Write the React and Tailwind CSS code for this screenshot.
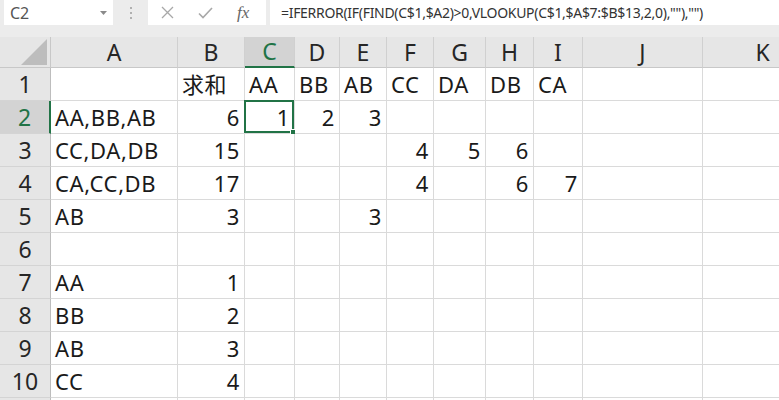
import React from "react";

const COLS = [
  { key: "A", w: "w-[127px]" },
  { key: "B", w: "w-[67px]" },
  { key: "C", w: "w-[50px]" },
  { key: "D", w: "w-[45px]" },
  { key: "E", w: "w-[47px]" },
  { key: "F", w: "w-[47px]" },
  { key: "G", w: "w-[52px]" },
  { key: "H", w: "w-[48px]" },
  { key: "I", w: "w-[49px]" },
  { key: "J", w: "w-[120px]" },
  { key: "K", w: "w-[120px]" },
];

// cell values, strings left, numbers right
const ROWS = [
  ["", "求和", "AA", "BB", "AB", "CC", "DA", "DB", "CA"],
  ["AA,BB,AB", 6, 1, 2, 3],
  ["CC,DA,DB", 15, "", "", "", 4, 5, 6],
  ["CA,CC,DB", 17, "", "", "", 4, "", 6, 7],
  ["AB", 3, "", "", 3],
  [],
  ["AA", 1],
  ["BB", 2],
  ["AB", 3],
  ["CC", 4],
];

const font = "font-['Noto_Sans','Noto_Sans_CJK_SC',sans-serif]";

function FormulaBar() {
  return (
    <div className="flex h-[37px] bg-[#ececec] items-start">
      <div className="ml-[4px] w-[109px] h-[25px] bg-white flex items-center justify-between pl-[6px] pr-[6px]">
        <span className={`${font} text-[16px] text-[#555]`}>C2</span>
        <svg width="7" height="4" viewBox="0 0 7 4"><path d="M0 0h7L3.5 4z" fill="#8a8a8a" /></svg>
      </div>
      <div className="w-[35px] h-[25px] flex flex-col items-center justify-center gap-[3px]">
        <div className="w-[2px] h-[2px] bg-[#b0b0b0]" />
        <div className="w-[2px] h-[2px] bg-[#b0b0b0]" />
        <div className="w-[2px] h-[2px] bg-[#b0b0b0]" />
      </div>
      <div className="w-[118px] h-[25px] bg-white flex items-center pl-[13px] gap-[24px]">
        <svg width="13" height="13" viewBox="0 0 13 13"><path d="M1 1l11 11M12 1L1 12" stroke="#a8a8a8" strokeWidth="1.3" /></svg>
        <svg width="15" height="12" viewBox="0 0 15 12"><path d="M1 6.5l4 4L14 1" stroke="#a8a8a8" strokeWidth="1.6" fill="none" /></svg>
        <span className="font-['Liberation_Serif',serif] italic text-[17px] text-[#666] leading-none">fx</span>
      </div>
      <div className="ml-[4px] flex-1 h-[25px] bg-white flex items-center pl-[11px] whitespace-nowrap overflow-hidden">
        <span className={`${font} text-[14px] text-[#333] tracking-[-0.3px]`}>
          =IFERROR(IF(FIND(C$1,$A2)&gt;0,VLOOKUP(C$1,$A$7:$B$13,2,0),""),"")
        </span>
      </div>
    </div>
  );
}

function HeaderRow() {
  return (
    <div className="flex h-[31px] bg-[#e6e6e6]">
      <div className="w-[51px] shrink-0 border-r border-b border-[#c8c8c8] flex items-center justify-end pr-[3px]">
        <svg width="26" height="26" viewBox="0 0 26 26"><path d="M26 0V26H0z" fill="#bdbdbd" /></svg>
      </div>
      {COLS.map((c) => {
        const sel = c.key === "C";
        return (
          <div
            key={c.key}
            className={`${c.w} shrink-0 border-r border-[#d0d0d0] flex items-center justify-center ${font} text-[23px] leading-none ${sel ? "bg-[#d3d3d3] text-[#217346] border-b-2 border-b-[#217346]" : "text-[#262626] border-b border-b-[#c8c8c8]"}`}
          >
            {c.key}
          </div>
        );
      })}
    </div>
  );
}

function Row({ n, cells, label = true }) {
  const selRow = n === 2;
  return (
    <div className="flex h-[33px]">
      <div
        className={`w-[51px] shrink-0 border-b border-[#d4d4d4] flex items-center justify-center ${font} text-[23px] leading-none ${selRow ? "bg-[#d3d3d3] text-[#217346] border-r-2 border-r-[#217346]" : "bg-[#e6e6e6] text-[#262626] border-r border-r-[#bdbdbd]"}`}
      >
        {label ? n : ""}
      </div>
      {COLS.map((c, i) => {
        const v = cells[i];
        const num = typeof v === "number";
        const sel = selRow && c.key === "C";
        return (
          <div
            key={c.key}
            className={`${c.w} shrink-0 relative border-r border-b border-[#dadada] bg-white flex items-center whitespace-nowrap ${font} text-[22px] tracking-[0.6px] text-[#1a1a1a] ${num ? "justify-end pr-[4px]" : "justify-start pl-[4px]"}`}
          >
            {v === undefined ? "" : v}
            {sel && (
              <div className="absolute -left-[1px] -top-[1px] right-0 bottom-0 border-2 border-[#217346]">
                <div className="absolute -right-[4px] -bottom-[4px] w-[6px] h-[6px] bg-[#217346] border border-white" />
              </div>
            )}
          </div>
        );
      })}
    </div>
  );
}

export default function App() {
  return (
    <div className="w-[779px] h-[400px] overflow-hidden bg-white">
      <FormulaBar />
      <div className="w-[823px]">
        <HeaderRow />
        {ROWS.map((cells, i) => (
          <Row key={i} n={i + 1} cells={cells} />
        ))}
        {/* row 11, only its top edge is on screen */}
        <Row n={11} cells={[]} label={false} />
      </div>
    </div>
  );
}
